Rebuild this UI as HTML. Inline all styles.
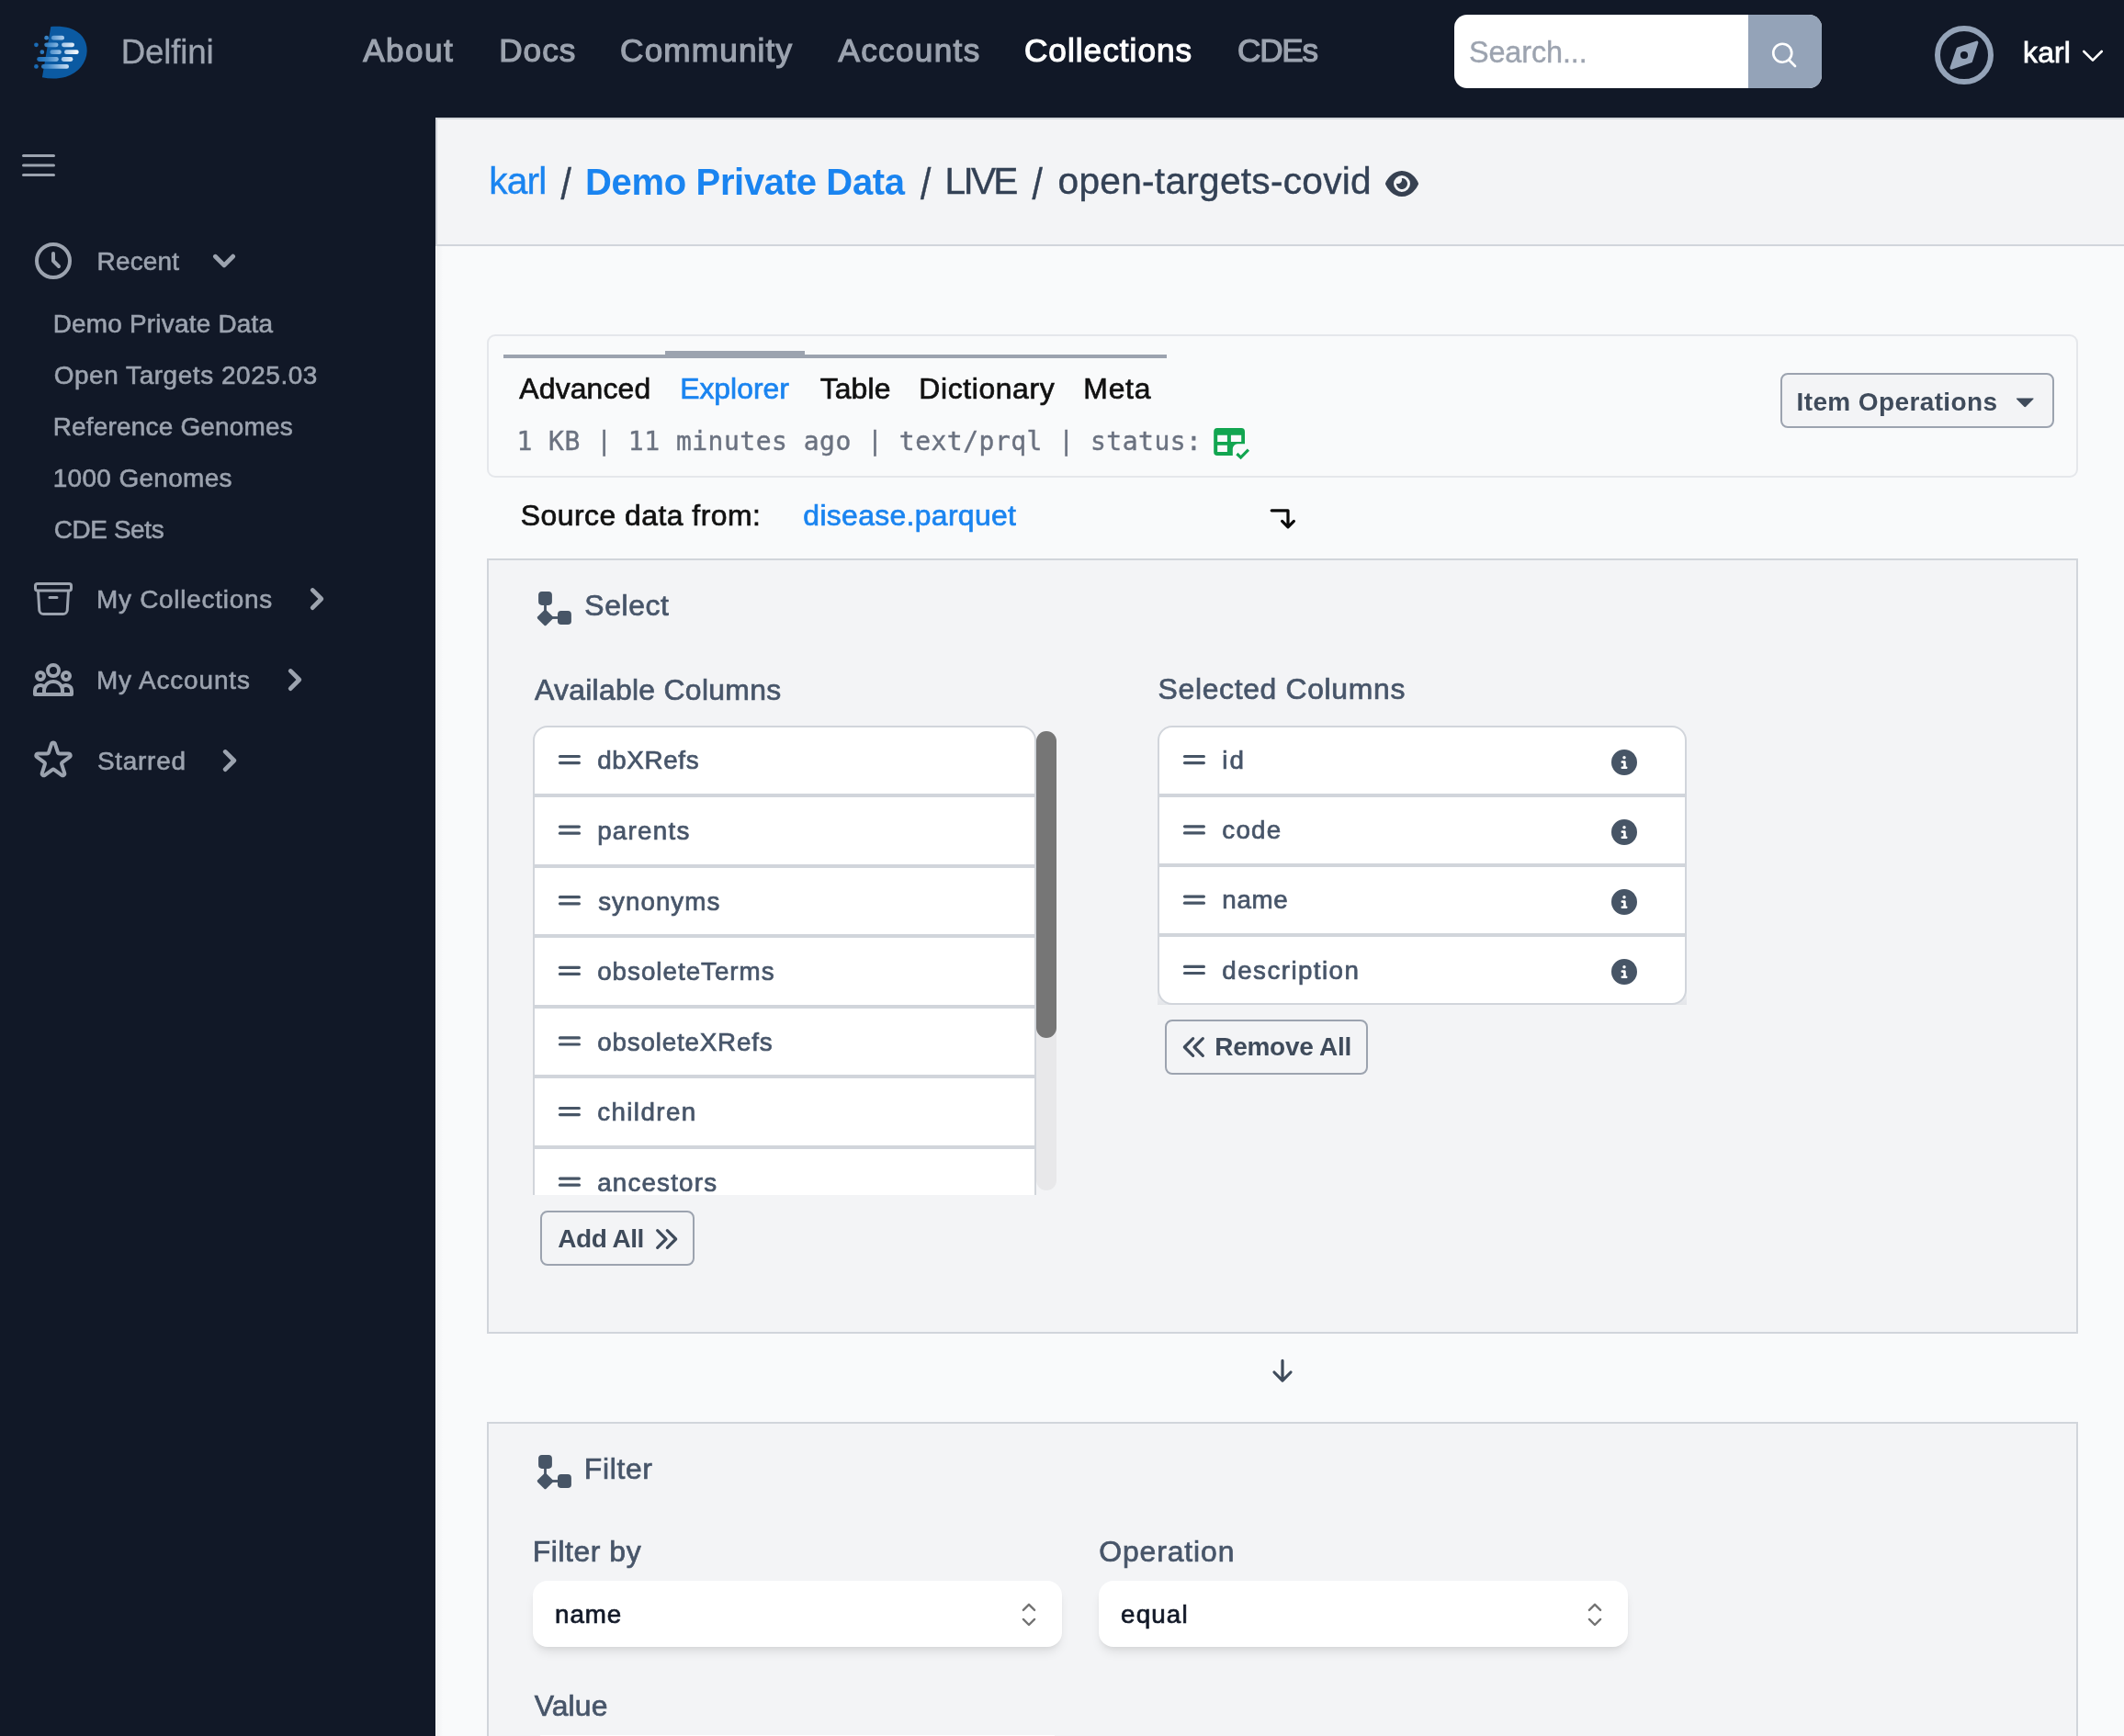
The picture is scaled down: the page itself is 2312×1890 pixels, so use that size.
<!DOCTYPE html>
<html lang="en">
<head>
<meta charset="utf-8">
<title>Delfini - open-targets-covid</title>
<style>
*{box-sizing:border-box;margin:0;padding:0}
html,body{width:2312px;height:1890px;overflow:hidden}
body{background:#f9fafb;font-family:"Liberation Sans",Arial,sans-serif;position:relative}
#page{position:absolute;left:0;top:0;width:2312px;height:1890px;overflow:hidden;background:#f9fafb}
.abs{position:absolute}
.t{position:absolute;white-space:nowrap;line-height:1;font-kerning:normal}
.sl{transform:scaleY(1.2);transform-origin:50% 12%}
svg{position:absolute;overflow:visible}
#nav{left:0;top:0;width:2312px;height:128px;background:#111827}
#side{left:0;top:128px;width:474px;height:1762px;background:#111827}
#hdr{left:474px;top:128px;width:1838px;height:140px;background:#f3f4f6;border-top:2px solid #d4d7dc;border-left:2px solid #d4d7dc;border-bottom:2px solid #d1d5db}
#mainedge{left:474px;top:268px;width:8px;height:1622px;background:linear-gradient(90deg,#fff 0,#fff 1px,#f1f2f4 1.5px,#f9fafb 8px)}
#tabcard{left:530px;top:364px;width:1732px;height:156px;border:2px solid #e5e7eb;border-radius:9px;background:#f9fafb}
#tabline{left:548px;top:386px;width:722px;height:4px;background:#9ca3af}
#tabact{left:724px;top:382px;width:152px;height:8px;background:#9ca3af}
#opsbtn{left:1938px;top:406px;width:298px;height:60px;border:2px solid #9ca3af;border-radius:8px;background:#f3f4f6}
.card{background:#f3f4f6;border:2px solid #d1d5db}
#selcard{left:530px;top:608px;width:1732px;height:844px}
#filcard{left:530px;top:1548px;width:1732px;height:342px;border-bottom:none}
#avail{left:580px;top:790px;width:548px;height:511px;overflow:hidden}
#availin{left:0;top:0;width:548px;height:620px;border:2px solid #d1d5db;border-radius:16px;background:#fff}
.div{position:absolute;left:0;width:100%;height:4px;background:#d1d5db}
#track{left:1128px;top:796px;width:22px;height:500px;border-radius:11px;background:#e8e8ea}
#thumb{left:1128px;top:796px;width:22px;height:334px;border-radius:11px;background:#767676}
#selshadow{left:1260px;top:1074px;width:576px;height:20px;background:linear-gradient(#f3f4f6,#e3e5e9)}
#sellist{left:1260px;top:790px;width:576px;height:304px;border:2px solid #d1d5db;border-radius:16px;background:#fff;overflow:hidden}
.btn{border:2px solid #9ca3af;border-radius:8px;background:#f3f4f6}
#addall{left:588px;top:1318px;width:168px;height:60px}
#remall{left:1268px;top:1110px;width:221px;height:60px}
.selbox{background:#fff;border-radius:16px;box-shadow:0 8px 12px -3px rgba(0,0,0,.10),0 3px 5px -2px rgba(0,0,0,.06)}
#fsel1{left:580px;top:1721px;width:576px;height:72px}
#fsel2{left:1196px;top:1721px;width:576px;height:72px}
#search{left:1583px;top:16px;width:400px;height:80px;border-radius:14px;background:#fff;overflow:hidden}
#texts{will-change:transform;position:absolute;left:0;top:0;width:2312px;height:1890px}
#searchbtn{left:320px;top:0;width:80px;height:80px;background:#94a3b8}
</style>
</head>
<body>
<div id="page">
<div id="nav" class="abs"></div>
<div id="side" class="abs"></div>
<div id="hdr" class="abs"></div>
<div id="mainedge" class="abs"></div>

<!-- search -->
<div id="search" class="abs"><div id="searchbtn" class="abs"></div></div>
<svg style="left:1926px;top:44.4px" width="32" height="32" viewBox="0 0 24 24" fill="none" stroke="#fff" stroke-width="2" stroke-linecap="round" stroke-linejoin="round"><path d="M21 21l-5.2-5.2m0 0A7.5 7.5 0 1 0 5.2 5.2a7.5 7.5 0 0 0 10.6 10.6z"/></svg>


<svg style="left:0px;top:0px" width="128" height="128" viewBox="0 0 128 128" ><defs><linearGradient id="lg" gradientUnits="userSpaceOnUse" x1="37" y1="0" x2="86" y2="0"><stop offset="0" stop-color="#1466b2"/><stop offset="0.3" stop-color="#3b85c7"/><stop offset="0.6" stop-color="#9cc2e6"/><stop offset="1" stop-color="#ffffff"/></linearGradient></defs><path fill="#0b5aa2" d="M55.3 29 C62 28.4 70 28.8 75.5 30.6 C88 34.5 95 44 94.7 55.5 C94.4 68 85.5 79.5 71.5 83.8 C63 86.2 54 86 45.9 84.3 Z"/><rect x="55.9" y="38.8" width="14.1" height="4.8" rx="2.4" fill="url(#lg)"/><rect x="48.2" y="46.4" width="15.3" height="4.8" rx="2.4" fill="url(#lg)"/><rect x="67" y="46.4" width="14.0" height="4.8" rx="2.4" fill="url(#lg)"/><rect x="54.4" y="54.3" width="12.4" height="4.8" rx="2.4" fill="url(#lg)"/><rect x="70" y="54.3" width="15.7" height="4.8" rx="2.4" fill="url(#lg)"/><rect x="40.2" y="62.1" width="23.6" height="4.8" rx="2.4" fill="url(#lg)"/><rect x="66.8" y="62.1" width="12.6" height="4.8" rx="2.4" fill="url(#lg)"/><rect x="45" y="70.0" width="30.0" height="4.8" rx="2.4" fill="url(#lg)"/><circle cx="50.6" cy="41.2" r="2.35" fill="url(#lg)"/><circle cx="39.4" cy="48.8" r="2.35" fill="url(#lg)"/><circle cx="45.8" cy="56.7" r="2.35" fill="url(#lg)"/><circle cx="39.4" cy="72.4" r="2.35" fill="url(#lg)"/></svg>
<svg style="left:0;top:0" width="2312" height="1890" viewBox="0 0 2312 1890"><g stroke="#9ca3af" stroke-width="3" stroke-linecap="round"><line x1="25.5" x2="58.5" y1="169.5" y2="169.5"/><line x1="25.5" x2="58.5" y1="180" y2="180"/><line x1="25.5" x2="58.5" y1="190.4" y2="190.4"/></g></svg>
<svg style="left:34px;top:260px" width="48" height="48" viewBox="0 0 24 24" fill="none" stroke="#9ca3af" stroke-width="2" stroke-linecap="round" stroke-linejoin="round"><path d="M12 8v4l3 3m6-3a9 9 0 11-18 0 9 9 0 0118 0z"/></svg>
<svg style="left:220px;top:260px" width="48" height="48" viewBox="0 0 20 20" fill="#9ca3af"><path fill-rule="evenodd" clip-rule="evenodd" d="M5.293 7.293a1 1 0 011.414 0L10 10.586l3.293-3.293a1 1 0 111.414 1.414l-4 4a1 1 0 01-1.414 0l-4-4a1 1 0 010-1.414z"/></svg>
<svg style="left:34px;top:628px" width="48" height="48" viewBox="0 0 24 24" fill="none" stroke="#9ca3af" stroke-width="1.5" stroke-linecap="round" stroke-linejoin="round"><path d="m20.25 7.5-.625 10.632a2.25 2.25 0 0 1-2.247 2.118H6.622a2.25 2.25 0 0 1-2.247-2.118L3.75 7.5M10 11.25h4M3.375 7.5h17.25c.621 0 1.125-.504 1.125-1.125v-1.5c0-.621-.504-1.125-1.125-1.125H3.375c-.621 0-1.125.504-1.125 1.125v1.5c0 .621.504 1.125 1.125 1.125Z"/></svg>
<svg style="left:320.8px;top:628px" width="48" height="48" viewBox="0 0 20 20" fill="#9ca3af"><path fill-rule="evenodd" clip-rule="evenodd" d="M7.293 14.707a1 1 0 010-1.414L10.586 10 7.293 6.707a1 1 0 011.414-1.414l4 4a1 1 0 010 1.414l-4 4a1 1 0 01-1.414 0z"/></svg>
<svg style="left:34px;top:716px" width="48" height="48" viewBox="0 0 24 24" fill="none" stroke="#9ca3af" stroke-width="2" stroke-linecap="round" stroke-linejoin="round"><path d="M17 20h5v-2a3 3 0 00-5.356-1.857M17 20H7m10 0v-2c0-.656-.126-1.283-.356-1.857M7 20H2v-2a3 3 0 015.356-1.857M7 20v-2c0-.656.126-1.283.356-1.857m0 0a5.002 5.002 0 019.288 0M15 7a3 3 0 11-6 0 3 3 0 016 0zm6 3a2 2 0 11-4 0 2 2 0 014 0zM7 10a2 2 0 11-4 0 2 2 0 014 0z"/></svg>
<svg style="left:296.9px;top:716px" width="48" height="48" viewBox="0 0 20 20" fill="#9ca3af"><path fill-rule="evenodd" clip-rule="evenodd" d="M7.293 14.707a1 1 0 010-1.414L10.586 10 7.293 6.707a1 1 0 011.414-1.414l4 4a1 1 0 010 1.414l-4 4a1 1 0 01-1.414 0z"/></svg>
<svg style="left:34px;top:804px" width="48" height="48" viewBox="0 0 24 24" fill="none" stroke="#9ca3af" stroke-width="2" stroke-linecap="round" stroke-linejoin="round"><path d="M11.049 2.927c.3-.921 1.603-.921 1.902 0l1.519 4.674a1 1 0 00.95.69h4.915c.969 0 1.371 1.24.588 1.81l-3.976 2.888a1 1 0 00-.363 1.118l1.518 4.674c.3.922-.755 1.688-1.538 1.118l-3.976-2.888a1 1 0 00-1.176 0l-3.976 2.888c-.783.57-1.838-.197-1.538-1.118l1.518-4.674a1 1 0 00-.363-1.118l-3.976-2.888c-.784-.57-.38-1.81.588-1.81h4.914a1 1 0 00.951-.69l1.519-4.674z"/></svg>
<svg style="left:225.8px;top:804px" width="48" height="48" viewBox="0 0 20 20" fill="#9ca3af"><path fill-rule="evenodd" clip-rule="evenodd" d="M7.293 14.707a1 1 0 010-1.414L10.586 10 7.293 6.707a1 1 0 011.414-1.414l4 4a1 1 0 010 1.414l-4 4a1 1 0 01-1.414 0z"/></svg>
<svg style="left:0;top:0" width="2312" height="1890" viewBox="0 0 2312 1890"><circle cx="2138" cy="60" r="29" fill="none" stroke="#94a3b8" stroke-width="6"/><path fill="#94a3b8" stroke="#94a3b8" stroke-width="3.6" stroke-linejoin="round" d="M2151.6 46.4 L2145.2 66.6 L2124.3 73.8 L2131.4 53.2 Z"/><circle cx="2138" cy="60" r="4.1" fill="#111827"/><path d="M2268.3 56 L2278 65.6 L2287.7 56" fill="none" stroke="#fff" stroke-width="2.6" stroke-linecap="round" stroke-linejoin="round"/></svg>
<svg style="left:1508px;top:184px" width="36" height="32" viewBox="0 0 576 512" ><path fill="#374151" d="M288 32c-80.8 0-145.5 36.8-192.6 80.6C48.6 156 17.3 208 2.500 243.700c-3.300 7.900-3.300 16.700 0 24.600C17.300 304 48.600 356 95.400 399.400C142.500 443.200 207.200 480 288 480s145.500-36.800 192.600-80.600c46.800-43.500 78.100-95.400 93-131.100c3.300-7.900 3.300-16.700 0-24.600c-14.900-35.700-46.200-87.700-93-131.100C433.500 68.800 368.800 32 288 32zM144 256a144 144 0 1 1 288 0 144 144 0 1 1 -288 0zm144-64c0 35.300-28.700 64-64 64c-7.100 0-13.900-1.200-20.300-3.300c-5.500-1.800-11.900 1.600-11.700 7.400c.3 6.900 1.300 13.800 3.200 20.700c13.700 51.200 66.400 81.600 117.600 67.900s81.600-66.400 67.900-117.600c-11.100-41.500-47.800-69.400-88.600-71.100c-5.800-.2-9.200 6.100-7.400 11.700c2.100 6.400 3.300 13.200 3.300 20.300z"/></svg>

<div id="tabcard" class="abs"></div>
<div id="tabline" class="abs"></div>
<div id="tabact" class="abs"></div>
<div id="opsbtn" class="abs"></div>

<div id="selcard" class="abs card"></div>
<div id="filcard" class="abs card"></div>

<div id="avail" class="abs"><div id="availin" class="abs">
<div class="div" style="top:72.0px"></div><div class="div" style="top:148.6px"></div><div class="div" style="top:225.2px"></div><div class="div" style="top:301.8px"></div><div class="div" style="top:378.4px"></div><div class="div" style="top:455.0px"></div><div class="div" style="top:531.6px"></div>
</div></div>
<div id="track" class="abs"></div>
<div id="thumb" class="abs"></div>
<div id="selshadow" class="abs"></div>
<div id="sellist" class="abs">
<div class="div" style="top:72.0px"></div><div class="div" style="top:148.2px"></div><div class="div" style="top:224.4px"></div>
</div>
<div id="addall" class="abs btn"></div>
<div id="remall" class="abs btn"></div>
<div id="fsel1" class="abs selbox"></div>
<div id="fsel2" class="abs selbox"></div>
<div id="valin" class="abs selbox" style="left:588px;top:1889px;width:560px;height:1px;border-radius:0;box-shadow:none"></div>

<svg style="left:0;top:0" width="2312" height="1890" viewBox="0 0 2312 1890"><path fill="#12a550" fill-rule="evenodd" d="M1325 466.1 h26.2 a3.8 3.8 0 0 1 3.8 3.8 v13.3 h-8 a5.5 5.5 0 0 0 -5.2 5.4 v7.5 h-16.8 a3.8 3.8 0 0 1 -3.8 -3.8 v-22.4 a3.8 3.8 0 0 1 3.8 -3.800 Z M1325.200 473.800 v7.100 h10.700 v-7.100 Z M1339.900 473.800 v7.100 h11.300 v-7.100 Z M1325.200 484.800 v7.100 h10.700 v-7.100 Z"/><path fill="none" stroke="#12a550" stroke-width="3.2" d="M1346.400 494 L1350.600 498.100 L1358.900 489.700"/><path fill="none" stroke="#0a0a0a" stroke-width="3.200" stroke-linecap="round" stroke-linejoin="round" d="M1384.200 555.800 H1402 V573.400 M1395.600 567.400 L1402 573.800 L1408.400 567.400"/><path fill="#3f4b5b" d="M2195.600 433.400 h17.300 q1.400 0 .5 1.100 l-8.200 8.300 q-.95 .95 -1.900 0 l-8.200 -8.300 q-.9 -1.100 .5 -1.100 Z"/><rect x="586.1" y="644" width="14.8" height="14.9" rx="3.8" fill="#475566"/><rect x="592.1" y="657" width="2.8" height="10" fill="#475566"/><rect x="-6.6" y="-6.6" width="13.2" height="13.2" rx="1.6" transform="translate(593.5 672.5) rotate(45)" fill="#475566"/><rect x="598" y="671.1" width="11" height="2.8" fill="#475566"/><rect x="607" y="665.1" width="14.9" height="14.9" rx="3.8" fill="#475566"/><rect x="586.1" y="1584" width="14.8" height="14.9" rx="3.8" fill="#475566"/><rect x="592.1" y="1597" width="2.8" height="10" fill="#475566"/><rect x="-6.6" y="-6.6" width="13.2" height="13.2" rx="1.6" transform="translate(593.5 1612.5) rotate(45)" fill="#475566"/><rect x="598" y="1611.1" width="11" height="2.8" fill="#475566"/><rect x="607" y="1605.1" width="14.9" height="14.9" rx="3.8" fill="#475566"/><g stroke="#475566" stroke-width="3.200" stroke-linecap="round"><line x1="609.500" x2="630.400" y1="823.50" y2="823.50"/><line x1="609.500" x2="630.400" y1="830.60" y2="830.60"/></g><g stroke="#475566" stroke-width="3.200" stroke-linecap="round"><line x1="609.500" x2="630.400" y1="900.10" y2="900.10"/><line x1="609.500" x2="630.400" y1="907.20" y2="907.20"/></g><g stroke="#475566" stroke-width="3.200" stroke-linecap="round"><line x1="609.500" x2="630.400" y1="976.70" y2="976.70"/><line x1="609.500" x2="630.400" y1="983.80" y2="983.80"/></g><g stroke="#475566" stroke-width="3.200" stroke-linecap="round"><line x1="609.500" x2="630.400" y1="1053.30" y2="1053.30"/><line x1="609.500" x2="630.400" y1="1060.40" y2="1060.40"/></g><g stroke="#475566" stroke-width="3.200" stroke-linecap="round"><line x1="609.500" x2="630.400" y1="1129.90" y2="1129.90"/><line x1="609.500" x2="630.400" y1="1137.00" y2="1137.00"/></g><g stroke="#475566" stroke-width="3.200" stroke-linecap="round"><line x1="609.500" x2="630.400" y1="1206.50" y2="1206.50"/><line x1="609.500" x2="630.400" y1="1213.60" y2="1213.60"/></g><g stroke="#475566" stroke-width="3.200" stroke-linecap="round"><line x1="609.500" x2="630.400" y1="1283.10" y2="1283.10"/><line x1="609.500" x2="630.400" y1="1290.20" y2="1290.20"/></g><g stroke="#475566" stroke-width="3.200" stroke-linecap="round"><line x1="1289.500" x2="1310.400" y1="823.50" y2="823.50"/><line x1="1289.500" x2="1310.400" y1="830.60" y2="830.60"/></g><g stroke="#475566" stroke-width="3.200" stroke-linecap="round"><line x1="1289.500" x2="1310.400" y1="899.80" y2="899.80"/><line x1="1289.500" x2="1310.400" y1="906.90" y2="906.90"/></g><g stroke="#475566" stroke-width="3.200" stroke-linecap="round"><line x1="1289.500" x2="1310.400" y1="976.10" y2="976.10"/><line x1="1289.500" x2="1310.400" y1="983.20" y2="983.20"/></g><g stroke="#475566" stroke-width="3.200" stroke-linecap="round"><line x1="1289.500" x2="1310.400" y1="1052.40" y2="1052.40"/><line x1="1289.500" x2="1310.400" y1="1059.50" y2="1059.50"/></g><path fill="none" stroke="#3f4b5b" stroke-width="3.200" stroke-linecap="round" stroke-linejoin="round" d="M1396 1481.400 V1503 M1387 1494 L1396 1503.200 L1405 1494"/><path fill="none" stroke="#737373" stroke-width="2.400" stroke-linecap="round" stroke-linejoin="round" d="M1113.9 1752.900 L1120 1746.800 L1126.1 1752.900 M1113.9 1762.900 L1120 1769 L1126.1 1762.900"/><path fill="none" stroke="#737373" stroke-width="2.400" stroke-linecap="round" stroke-linejoin="round" d="M1729.9 1752.900 L1736 1746.800 L1742.1 1752.900 M1729.9 1762.900 L1736 1769 L1742.1 1762.900"/></svg>
<svg style="left:1754px;top:816.2px" width="28" height="28" viewBox="0 0 512 512" ><path fill="#475566" d="M256 512A256 256 0 1 0 256 0a256 256 0 1 0 0 512zM216 336h24V272H216c-13.300 0-24-10.700-24-24s10.700-24 24-24h48c13.300 0 24 10.700 24 24v88h8c13.300 0 24 10.700 24 24s-10.700 24-24 24H216c-13.300 0-24-10.700-24-24s10.700-24 24-24zm40-208a32 32 0 1 1 0 64 32 32 0 1 1 0-64z"/></svg>
<svg style="left:1754px;top:892px" width="28" height="28" viewBox="0 0 512 512" ><path fill="#475566" d="M256 512A256 256 0 1 0 256 0a256 256 0 1 0 0 512zM216 336h24V272H216c-13.300 0-24-10.700-24-24s10.700-24 24-24h48c13.300 0 24 10.700 24 24v88h8c13.300 0 24 10.700 24 24s-10.700 24-24 24H216c-13.300 0-24-10.700-24-24s10.700-24 24-24zm40-208a32 32 0 1 1 0 64 32 32 0 1 1 0-64z"/></svg>
<svg style="left:1754px;top:968px" width="28" height="28" viewBox="0 0 512 512" ><path fill="#475566" d="M256 512A256 256 0 1 0 256 0a256 256 0 1 0 0 512zM216 336h24V272H216c-13.300 0-24-10.700-24-24s10.700-24 24-24h48c13.300 0 24 10.700 24 24v88h8c13.300 0 24 10.700 24 24s-10.700 24-24 24H216c-13.300 0-24-10.700-24-24s10.700-24 24-24zm40-208a32 32 0 1 1 0 64 32 32 0 1 1 0-64z"/></svg>
<svg style="left:1754px;top:1044.3px" width="28" height="28" viewBox="0 0 512 512" ><path fill="#475566" d="M256 512A256 256 0 1 0 256 0a256 256 0 1 0 0 512zM216 336h24V272H216c-13.300 0-24-10.700-24-24s10.700-24 24-24h48c13.300 0 24 10.700 24 24v88h8c13.300 0 24 10.700 24 24s-10.700 24-24 24H216c-13.300 0-24-10.700-24-24s10.700-24 24-24zm40-208a32 32 0 1 1 0 64 32 32 0 1 1 0-64z"/></svg>
<svg style="left:708.5px;top:1332.5px" width="32" height="32" viewBox="0 0 24 24" fill="none" stroke="#3f4b5b" stroke-width="2.4" stroke-linecap="round" stroke-linejoin="round"><path d="M13 5l7 7-7 7M5 5l7 7-7 7"/></svg>
<svg style="left:1283.6px;top:1123.7px" width="32" height="32" viewBox="0 0 24 24" fill="none" stroke="#3f4b5b" stroke-width="2.4" stroke-linecap="round" stroke-linejoin="round"><path d="M11 19l-7-7 7-7m8 14l-7-7 7-7"/></svg>
<div id="texts">
<span class="t " style='left:131.71px;top:38.65px;font-size:36.69px;color:#9ca3af;letter-spacing:-0.179px;-webkit-text-stroke:0.3px #9ca3af;'>Delfini</span>
<span class="t " style='left:395.30px;top:37.11px;font-size:35.19px;color:#9ca3af;letter-spacing:1.361px;-webkit-text-stroke:1.2px #9ca3af;'>About</span>
<span class="t " style='left:543.15px;top:37.11px;font-size:35.19px;color:#9ca3af;letter-spacing:1.021px;-webkit-text-stroke:1.2px #9ca3af;'>Docs</span>
<span class="t " style='left:675.12px;top:37.11px;font-size:35.19px;color:#9ca3af;letter-spacing:1.131px;-webkit-text-stroke:1.2px #9ca3af;'>Community</span>
<span class="t " style='left:912.40px;top:37.11px;font-size:35.19px;color:#9ca3af;letter-spacing:1.320px;-webkit-text-stroke:1.2px #9ca3af;'>Accounts</span>
<span class="t " style='left:1114.92px;top:37.11px;font-size:35.19px;color:#ffffff;letter-spacing:1.025px;-webkit-text-stroke:1.2px #ffffff;'>Collections</span>
<span class="t " style='left:1347.02px;top:37.11px;font-size:35.19px;color:#9ca3af;letter-spacing:-1.244px;-webkit-text-stroke:1.2px #9ca3af;'>CDEs</span>
<span class="t " style='left:1598.99px;top:40.80px;font-size:32.39px;color:#9ca3af;letter-spacing:-0.110px;-webkit-text-stroke:0.4px #9ca3af;'>Search...</span>
<span class="t " style='left:2202.02px;top:41.52px;font-size:31.72px;color:#ffffff;letter-spacing:0.253px;-webkit-text-stroke:0.8px #ffffff;'>karl</span>
<span class="t " style='left:105.61px;top:270.71px;font-size:27.92px;color:#9ca3af;letter-spacing:0.200px;-webkit-text-stroke:0.6px #9ca3af;'>Recent</span>
<span class="t " style='left:57.71px;top:338.71px;font-size:27.92px;color:#9ca3af;letter-spacing:0.223px;-webkit-text-stroke:0.6px #9ca3af;'>Demo Private Data</span>
<span class="t " style='left:58.70px;top:394.91px;font-size:27.92px;color:#9ca3af;letter-spacing:0.581px;-webkit-text-stroke:0.6px #9ca3af;'>Open Targets 2025.03</span>
<span class="t " style='left:57.71px;top:451.11px;font-size:27.92px;color:#9ca3af;letter-spacing:0.221px;-webkit-text-stroke:0.6px #9ca3af;'>Reference Genomes</span>
<span class="t " style='left:57.71px;top:506.71px;font-size:27.92px;color:#9ca3af;letter-spacing:0.368px;-webkit-text-stroke:0.6px #9ca3af;'>1000 Genomes</span>
<span class="t " style='left:58.70px;top:562.91px;font-size:27.92px;color:#9ca3af;letter-spacing:-0.371px;-webkit-text-stroke:0.6px #9ca3af;'>CDE Sets</span>
<span class="t " style='left:105.01px;top:638.71px;font-size:27.92px;color:#9ca3af;letter-spacing:0.749px;-webkit-text-stroke:0.6px #9ca3af;'>My Collections</span>
<span class="t " style='left:105.01px;top:727.02px;font-size:27.92px;color:#9ca3af;letter-spacing:0.865px;-webkit-text-stroke:0.6px #9ca3af;'>My Accounts</span>
<span class="t " style='left:106.00px;top:814.71px;font-size:27.92px;color:#9ca3af;letter-spacing:0.732px;-webkit-text-stroke:0.6px #9ca3af;'>Starred</span>
<span class="t " style='left:532.17px;top:177.42px;font-size:40.65px;color:#1a84f0;letter-spacing:-0.752px;-webkit-text-stroke:0.4px #1a84f0;'>karl</span>
<span class="t sl" style='left:610.50px;top:177.42px;font-size:40.65px;color:#334155;letter-spacing:0.000px;-webkit-text-stroke:0.4px #334155;'>/</span>
<span class="t " style='left:637.00px;top:177.61px;font-size:40.00px;color:#1a84f0;letter-spacing:-0.339px;font-weight:700;'>Demo Private Data</span>
<span class="t sl" style='left:1002.00px;top:177.42px;font-size:40.65px;color:#334155;letter-spacing:0.000px;-webkit-text-stroke:0.4px #334155;'>/</span>
<span class="t " style='left:1028.55px;top:177.42px;font-size:40.65px;color:#334155;letter-spacing:-2.726px;-webkit-text-stroke:0.4px #334155;'>LIVE</span>
<span class="t sl" style='left:1123.60px;top:177.42px;font-size:40.65px;color:#334155;letter-spacing:0.000px;-webkit-text-stroke:0.4px #334155;'>/</span>
<span class="t " style='left:1151.58px;top:177.42px;font-size:40.65px;color:#334155;letter-spacing:0.265px;-webkit-text-stroke:0.4px #334155;'>open-targets-covid</span>
<span class="t " style='left:565.35px;top:407.86px;font-size:31.89px;color:#111111;letter-spacing:0.151px;-webkit-text-stroke:0.7px #111111;'>Advanced</span>
<span class="t " style='left:740.16px;top:407.86px;font-size:31.89px;color:#1a84f0;letter-spacing:0.001px;-webkit-text-stroke:0.7px #1a84f0;'>Explorer</span>
<span class="t " style='left:892.65px;top:407.86px;font-size:31.89px;color:#111111;letter-spacing:0.140px;-webkit-text-stroke:0.7px #111111;'>Table</span>
<span class="t " style='left:1000.36px;top:407.86px;font-size:31.89px;color:#111111;letter-spacing:0.613px;-webkit-text-stroke:0.7px #111111;'>Dictionary</span>
<span class="t " style='left:1179.36px;top:407.86px;font-size:31.89px;color:#111111;letter-spacing:0.732px;-webkit-text-stroke:0.7px #111111;'>Meta</span>
<span class="t " style='left:562.40px;top:466.80px;font-size:28.00px;color:#6b7280;letter-spacing:0.493px;font-family:"DejaVu Sans Mono", "Liberation Mono", monospace;-webkit-text-stroke:0.4px #6b7280;'>1 KB | 11 minutes ago | text/prql | status:</span>
<span class="t " style='left:1955.50px;top:423.61px;font-size:28.00px;color:#3f4b5b;letter-spacing:0.387px;font-weight:700;'>Item Operations</span>
<span class="t " style='left:566.85px;top:545.66px;font-size:31.89px;color:#111111;letter-spacing:0.482px;-webkit-text-stroke:0.7px #111111;'>Source data from:</span>
<span class="t " style='left:874.35px;top:545.66px;font-size:31.89px;color:#1a84f0;letter-spacing:0.340px;-webkit-text-stroke:0.7px #1a84f0;'>disease.parquet</span>
<span class="t " style='left:636.35px;top:643.57px;font-size:31.89px;color:#475569;letter-spacing:0.572px;-webkit-text-stroke:0.7px #475569;'>Select</span>
<span class="t " style='left:581.95px;top:735.66px;font-size:31.89px;color:#475569;letter-spacing:0.298px;-webkit-text-stroke:0.7px #475569;'>Available Columns</span>
<span class="t " style='left:1260.55px;top:735.27px;font-size:31.89px;color:#475569;letter-spacing:0.674px;-webkit-text-stroke:0.7px #475569;'>Selected Columns</span>
<span class="t av" style='left:650.16px;top:814.36px;font-size:27.76px;color:#475569;letter-spacing:0.670px;-webkit-text-stroke:0.7px #475569;'>dbXRefs</span>
<span class="t av" style='left:650.16px;top:890.96px;font-size:27.76px;color:#475569;letter-spacing:1.267px;-webkit-text-stroke:0.7px #475569;'>parents</span>
<span class="t av" style='left:651.15px;top:967.55px;font-size:27.76px;color:#475569;letter-spacing:1.035px;-webkit-text-stroke:0.7px #475569;'>synonyms</span>
<span class="t av" style='left:650.16px;top:1044.16px;font-size:27.76px;color:#475569;letter-spacing:0.998px;-webkit-text-stroke:0.7px #475569;'>obsoleteTerms</span>
<span class="t av" style='left:650.16px;top:1120.77px;font-size:27.76px;color:#475569;letter-spacing:0.829px;-webkit-text-stroke:0.7px #475569;'>obsoleteXRefs</span>
<span class="t av" style='left:650.16px;top:1197.36px;font-size:27.76px;color:#475569;letter-spacing:1.406px;-webkit-text-stroke:0.7px #475569;'>children</span>
<span class="t av" style='left:650.16px;top:1273.96px;font-size:27.76px;color:#475569;letter-spacing:1.193px;-webkit-text-stroke:0.7px #475569;'>ancestors</span>
<span class="t " style='left:1330.36px;top:814.27px;font-size:27.76px;color:#475569;letter-spacing:2.046px;-webkit-text-stroke:0.7px #475569;'>id</span>
<span class="t " style='left:1330.36px;top:890.36px;font-size:27.76px;color:#475569;letter-spacing:1.223px;-webkit-text-stroke:0.7px #475569;'>code</span>
<span class="t " style='left:1330.36px;top:966.46px;font-size:27.76px;color:#475569;letter-spacing:0.675px;-webkit-text-stroke:0.7px #475569;'>name</span>
<span class="t " style='left:1330.36px;top:1042.55px;font-size:27.76px;color:#475569;letter-spacing:1.432px;-webkit-text-stroke:0.7px #475569;'>description</span>
<span class="t " style='left:607.30px;top:1334.61px;font-size:28.00px;color:#3f4b5b;letter-spacing:-0.485px;font-weight:700;'>Add All</span>
<span class="t " style='left:1322.20px;top:1125.91px;font-size:28.00px;color:#3f4b5b;letter-spacing:-0.269px;font-weight:700;'>Remove All</span>
<span class="t " style='left:635.76px;top:1583.96px;font-size:31.89px;color:#475569;letter-spacing:0.677px;-webkit-text-stroke:0.7px #475569;'>Filter</span>
<span class="t " style='left:579.76px;top:1674.27px;font-size:31.89px;color:#475569;letter-spacing:0.561px;-webkit-text-stroke:0.7px #475569;'>Filter by</span>
<span class="t " style='left:1196.35px;top:1674.27px;font-size:31.89px;color:#475569;letter-spacing:0.880px;-webkit-text-stroke:0.7px #475569;'>Operation</span>
<span class="t " style='left:604.06px;top:1743.66px;font-size:27.76px;color:#111827;letter-spacing:0.908px;-webkit-text-stroke:0.7px #111827;'>name</span>
<span class="t " style='left:1220.06px;top:1743.66px;font-size:27.76px;color:#111827;letter-spacing:1.171px;-webkit-text-stroke:0.7px #111827;'>equal</span>
<span class="t " style='left:581.75px;top:1841.66px;font-size:31.89px;color:#475569;letter-spacing:0.125px;-webkit-text-stroke:0.7px #475569;'>Value</span>
</div>
</div>
</body>
</html>
